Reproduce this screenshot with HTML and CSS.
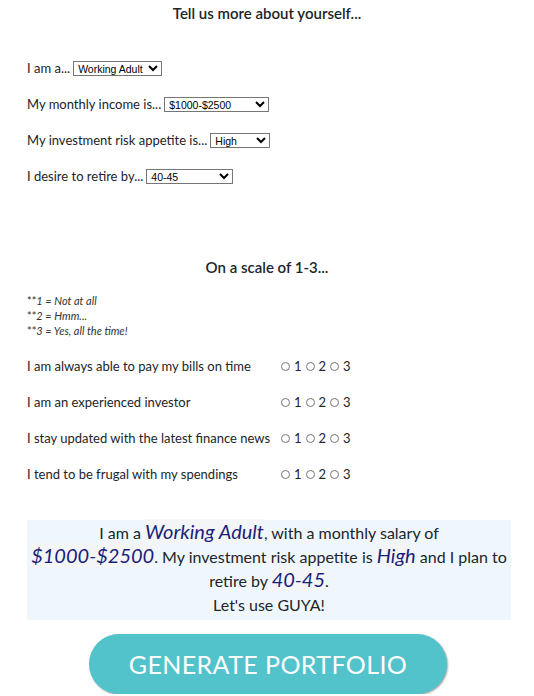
FILE: index.html
```html
<!DOCTYPE html>
<html>
<head>
<meta charset="utf-8">
<link rel="stylesheet" href="styles.css">
</head>
<body>
<h3 class="title">Tell us more about yourself...</h3>
<div class="profile">
  <div class="row">I am a... <select class="sel sel-who"><option>Working Adult</option></select></div>
  <div class="row">My monthly income is... <select class="sel sel-income"><option>$1000-$2500</option></select></div>
  <div class="row">My investment risk appetite is... <select class="sel sel-risk"><option>High</option></select></div>
  <div class="row">I desire to retire by... <select class="sel sel-retire"><option>40-45</option></select></div>
</div>
<h3 class="title title-scale">On a scale of 1-3...</h3>
<div class="notes">
  <div>**<i>1 = Not at all</i></div>
  <div>**<i>2 = Hmm...</i></div>
  <div>**<i>3 = Yes, all the time!</i></div>
</div>
<div class="scale">
  <div class="q">I am always able to pay my bills on time</div>
  <div class="radios"><input type="radio" name="a"><span>1</span><input type="radio" name="a"><span>2</span><input type="radio" name="a"><span>3</span></div>
  <div class="q">I am an experienced investor</div>
  <div class="radios"><input type="radio" name="b"><span>1</span><input type="radio" name="b"><span>2</span><input type="radio" name="b"><span>3</span></div>
  <div class="q">I stay updated with the latest finance news</div>
  <div class="radios"><input type="radio" name="c"><span>1</span><input type="radio" name="c"><span>2</span><input type="radio" name="c"><span>3</span></div>
  <div class="q">I tend to be frugal with my spendings</div>
  <div class="radios"><input type="radio" name="d"><span>1</span><input type="radio" name="d"><span>2</span><input type="radio" name="d"><span>3</span></div>
</div>
<div class="summary">
  I am a <em class="hl">Working Adult</em>, with a monthly salary of<br><em class="hl">$1000-$2500</em>. My investment risk appetite is <em class="hl">High</em> and I plan to<br>retire by <em class="hl">40-45</em>.<br>Let's use GUYA!
</div>
<div class="actions">
  <button class="btn">GENERATE PORTFOLIO</button>
</div>
</body>
</html>
```
FILE: styles.css
```css
html, body {
  margin: 0;
  padding: 0;
  background: #fff;
}
body {
  font-family: Lato, "Open Sans", sans-serif;
  color: #212529;
  font-size: 13px;
}
.title {
  margin: 0;
  padding-top: 4px;
  text-align: center;
  font-size: 15px;
  font-weight: 600;
  line-height: 18px;
}
.profile {
  padding: 28px 27px 0;
}
.row {
  height: 36px;
  line-height: 16px;
  display: flex;
  align-items: center;
  gap: 3px;
}
.sel {
  font-family: Arial, "Liberation Sans", sans-serif;
  font-size: 10.5px;
  height: 15px;
  padding: 0;
  border: 1px solid #767676;
  border-radius: 0;
  color: #000;
  background: #fff;
}
.sel-who { width: 89px; }
.sel-income { width: 105px; }
.sel-risk { width: 60px; }
.sel-retire { width: 87px; }
.title-scale {
  margin-top: 60px;
}
.notes {
  padding: 17px 27px 0;
  font-size: 11px;
  line-height: 15px;
  color: #333;
}
.scale {
  padding: 10px 27px 0;
  display: grid;
  grid-template-columns: 250px auto;
  grid-auto-rows: 36px;
  align-items: center;
}
.radios {
  display: flex;
  align-items: center;
}
.radios input {
  width: 9px;
  height: 9px;
  margin: 0 4px;
}
.summary {
  margin: 28px 23px 0 27px;
  background: #eff7fd;
  text-align: center;
  white-space: nowrap;
  font-size: 16px;
  line-height: 24px;
  padding: 1px 0 0;
  height: 100px;
  box-sizing: border-box;
}
.hl {
  font-size: 20px;
  line-height: 20px;
  color: #1b1f7a;
  background: #f4f5f6;
}
.actions {
  display: flex;
  justify-content: center;
  padding: 14px 0 0 2px;
}
.btn {
  width: 358px;
  height: 60px;
  border: none;
  border-radius: 30px;
  background: #52c3cb;
  color: #fff;
  font-family: Lato, sans-serif;
  font-size: 25px;
  letter-spacing: 0.4px;
  box-shadow: 1px 1px 2px rgba(0,0,0,0.35);
}
```
